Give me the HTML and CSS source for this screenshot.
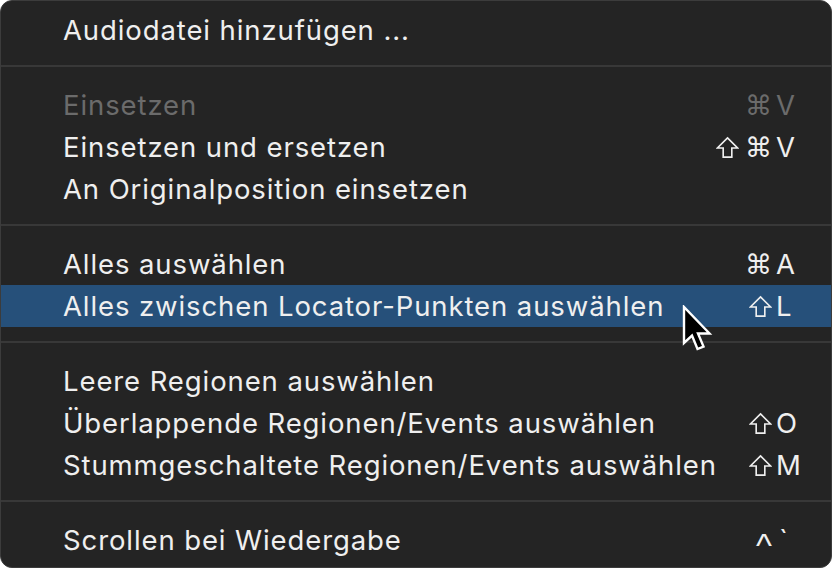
FILE: index.html
```
<!DOCTYPE html>
<html lang="de">
<head>
<meta charset="utf-8">
<link rel="stylesheet" href="styles.css">
</head>
<body>
<div class="menu">
  <div class="item"><span class="label">Audiodatei hinzufügen ...</span></div>
  <div class="sep"></div>
  <div class="item disabled"><span class="label">Einsetzen</span><span class="mod"><span class="cmd">⌘</span></span><span class="key">V</span></div>
  <div class="item"><span class="label">Einsetzen und ersetzen</span><span class="mod"><svg class="shift" viewBox="0 0 24 24"><path d="M12 2 L22.5 12.5 L16.5 12.5 L16.5 22 L7.5 22 L7.5 12.5 L1.5 12.5 Z"/></svg><span class="cmd">⌘</span></span><span class="key">V</span></div>
  <div class="item"><span class="label">An Originalposition einsetzen</span></div>
  <div class="sep"></div>
  <div class="item"><span class="label">Alles auswählen</span><span class="mod"><span class="cmd">⌘</span></span><span class="key">A</span></div>
  <div class="item active"><span class="label">Alles zwischen Locator-Punkten auswählen</span><span class="mod"><svg class="shift" viewBox="0 0 24 24"><path d="M12 2 L22.5 12.5 L16.5 12.5 L16.5 22 L7.5 22 L7.5 12.5 L1.5 12.5 Z"/></svg></span><span class="key">L</span>
    <svg class="cursor" viewBox="0 0 32 48"><path d="M2 2 L2 38 L10 30.5 L15.5 44 L21.5 41.5 L16 28.5 L27.5 28.5 Z"/></svg>
  </div>
  <div class="sep"></div>
  <div class="item"><span class="label">Leere Regionen auswählen</span></div>
  <div class="item"><span class="label">Überlappende Regionen/Events auswählen</span><span class="mod"><svg class="shift" viewBox="0 0 24 24"><path d="M12 2 L22.5 12.5 L16.5 12.5 L16.5 22 L7.5 22 L7.5 12.5 L1.5 12.5 Z"/></svg></span><span class="key">O</span></div>
  <div class="item"><span class="label">Stummgeschaltete Regionen/Events auswählen</span><span class="mod"><svg class="shift" viewBox="0 0 24 24"><path d="M12 2 L22.5 12.5 L16.5 12.5 L16.5 22 L7.5 22 L7.5 12.5 L1.5 12.5 Z"/></svg></span><span class="key">M</span></div>
  <div class="sep"></div>
  <div class="item"><span class="label">Scrollen bei Wiedergabe</span><span class="mod"><span class="ctrl">^</span></span><span class="key grave">`</span></div>
</div>
</body>
</html>
```
FILE: styles.css
```
html, body {
  margin: 0;
  background: #ffffff;
}
body {
  width: 833px;
  height: 572px;
  overflow: hidden;
}
.menu {
  box-sizing: border-box;
  width: 832px;
  height: 568px;
  background: #242424;
  border: 1px solid #3c3c3c;
  border-radius: 12px;
  padding-top: 8px;
  font-family: "Inter", "Liberation Sans", sans-serif;
  font-size: 27.5px;
  letter-spacing: 0.9px;
  color: #efefef;
  overflow: hidden;
}
.item {
  position: relative;
  height: 42px;
  display: grid;
  grid-template-columns: 1fr auto 55px;
  column-gap: 4px;
  align-items: center;
}
.label {
  padding-left: 62px;
  white-space: nowrap;
}
.mod {
  display: flex;
  align-items: center;
  justify-content: flex-end;
  gap: 6px;
  height: 42px;
}
.cmd {
  font-family: "DejaVu Sans", sans-serif;
  font-size: 27px;
  letter-spacing: 0;
  line-height: 1;
}
.ctrl {
  font-family: "Liberation Sans", sans-serif;
  font-size: 34px;
  letter-spacing: 0;
  line-height: 1;
  margin-top: 10px;
}
.key {
  text-align: left;
}
.shift {
  width: 23px;
  height: 23px;
  fill: none;
  stroke: currentColor;
  stroke-width: 1.7;
  stroke-linejoin: miter;
}
.disabled {
  color: #6b6b6b;
}
.active {
  background: #26507a;
}
.sep {
  height: 2px;
  margin: 14px 0 17px;
  background: #383838;
}
.grave {
  padding-left: 3px;
}
.cursor {
  position: absolute;
  left: 681px;
  top: 20px;
  width: 32px;
  height: 48px;
  fill: #000;
  stroke: #fff;
  stroke-width: 2.4;
  stroke-linejoin: miter;
}
```
